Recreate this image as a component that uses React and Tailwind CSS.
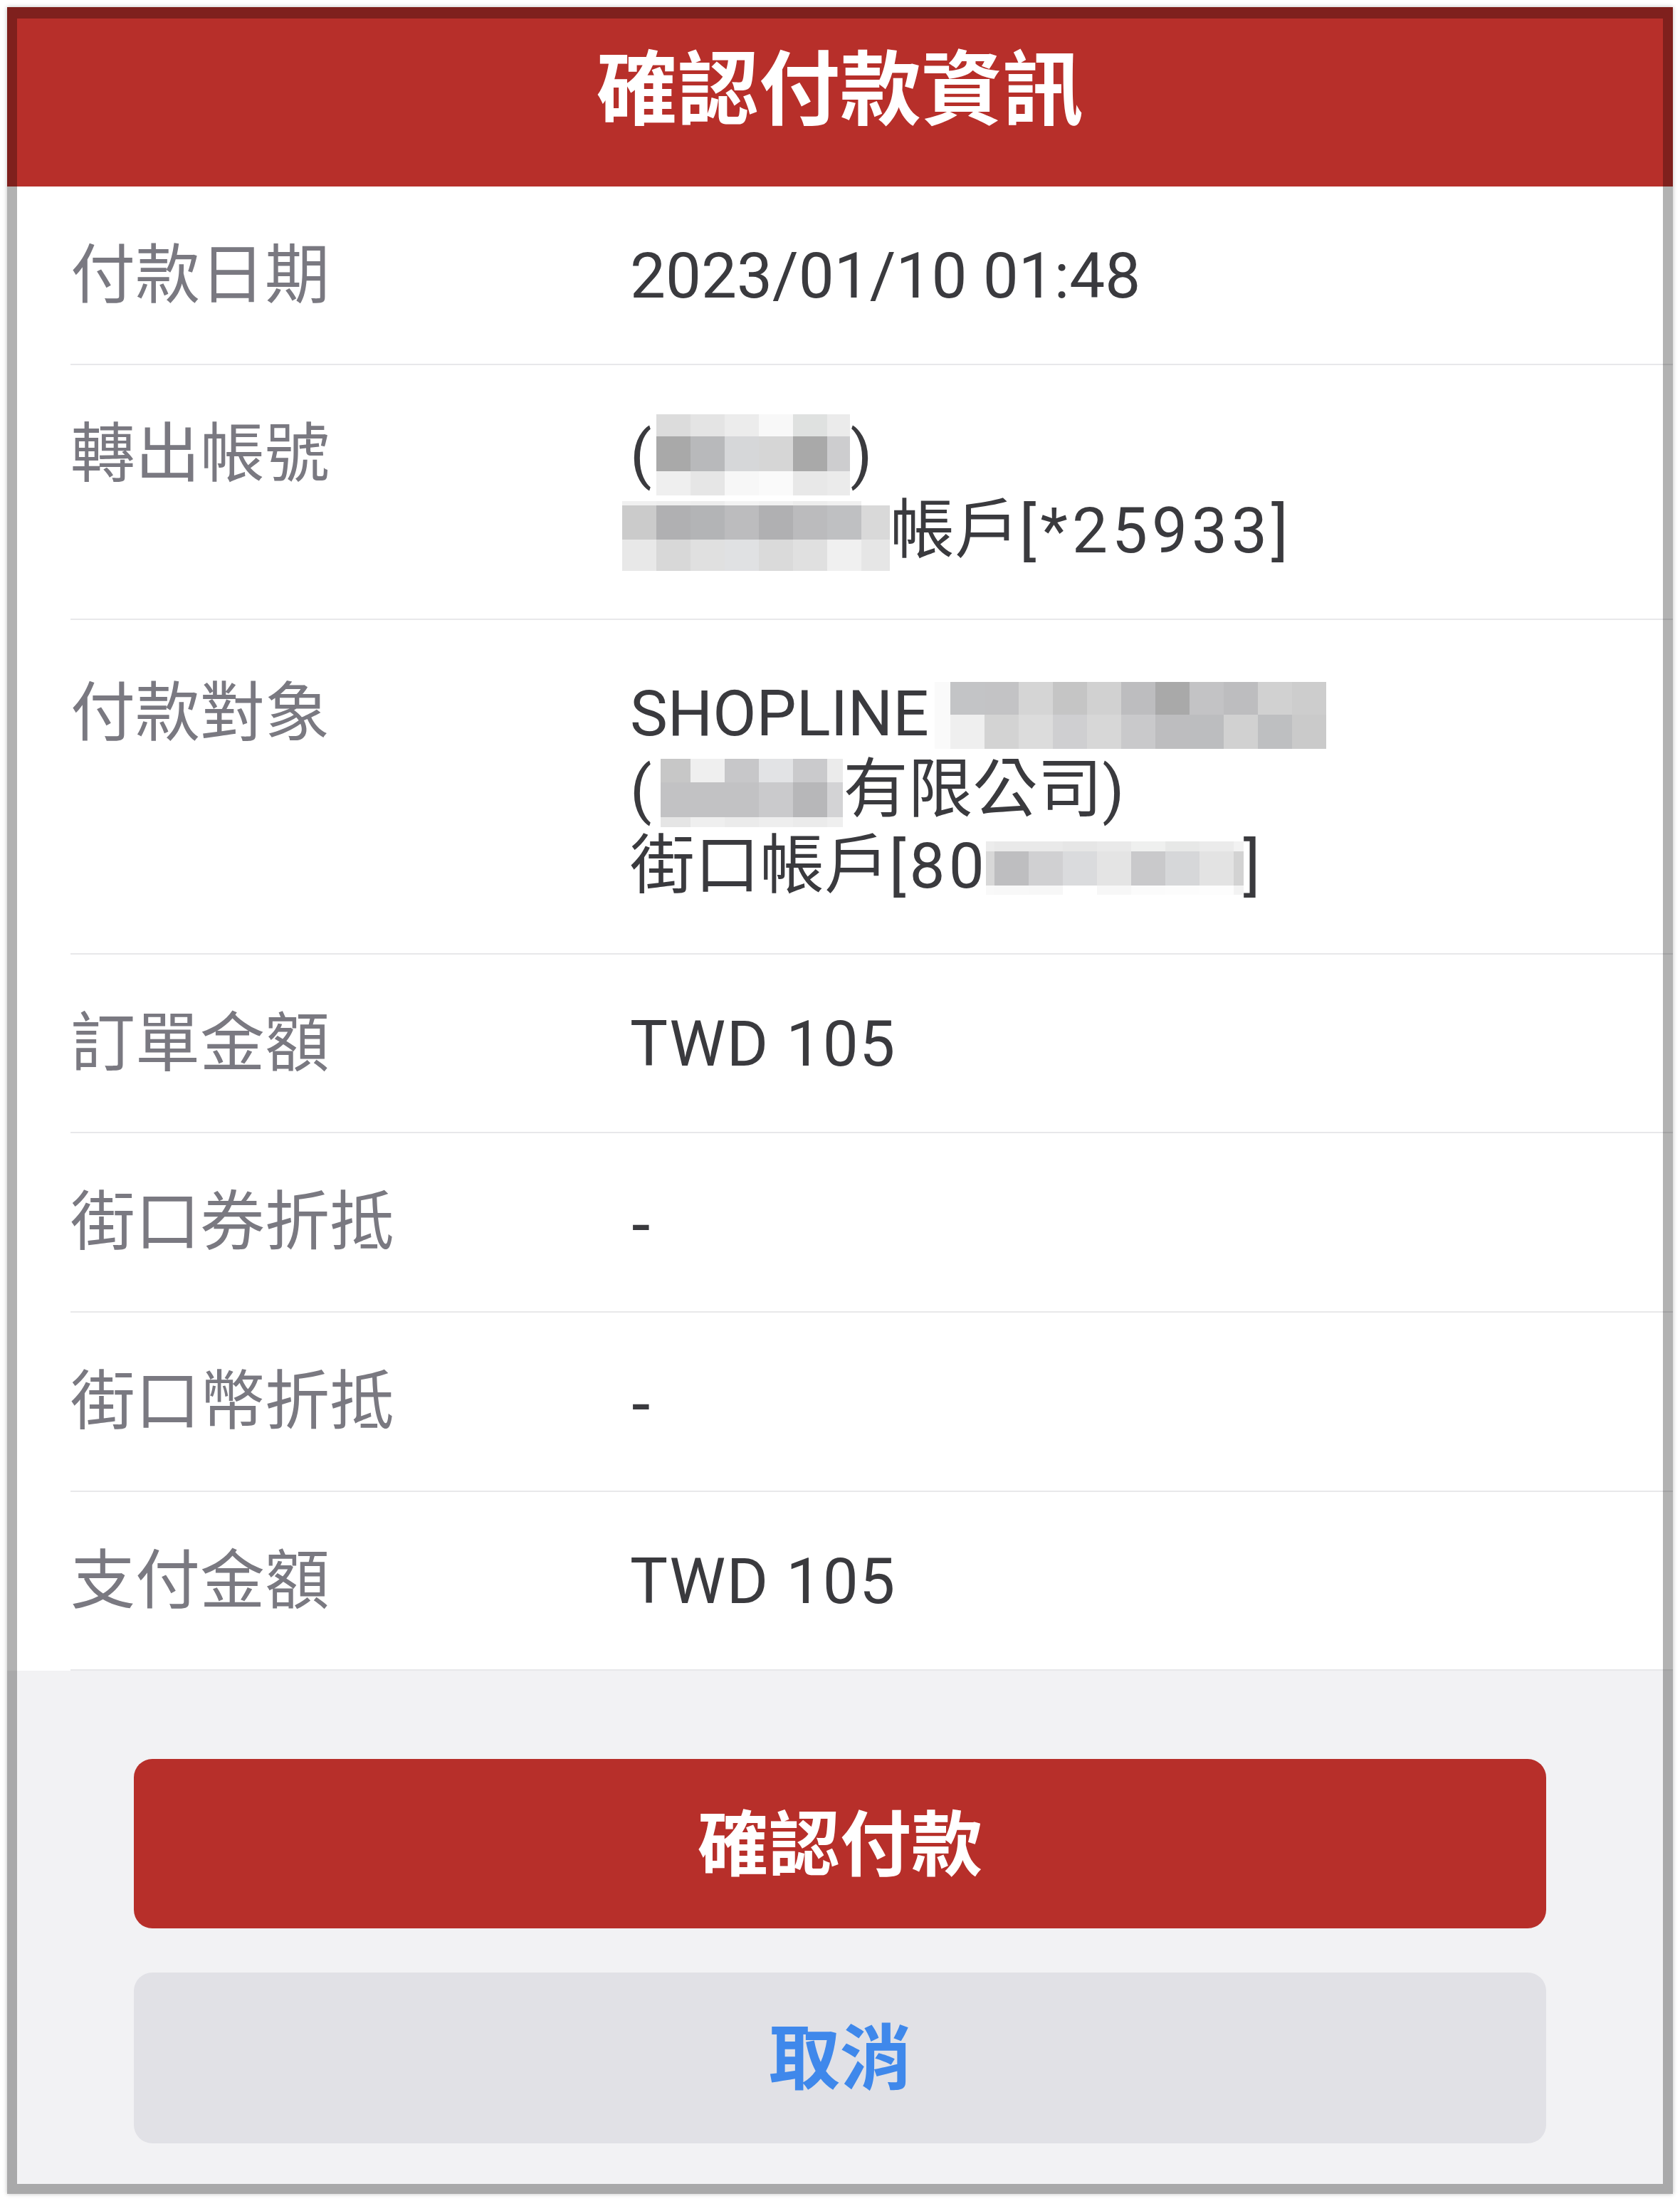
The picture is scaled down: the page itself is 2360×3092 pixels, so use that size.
import React from "react";

const M1 = {
  cols: [48, 48, 48, 48, 48, 32],
  rows: [31, 49, 34],
  colors: [
    ["#dcdcdc", "#e4e4e4", "#ececec", "#f8f8f8", "#dfe1e0", "#ebebeb"],
    ["#a9a9a9", "#b8b9bb", "#d6d7d9", "#d6d6d6", "#a9a9a9", "#cdcdcf"],
    ["#efefef", "#e6e6e6", "#f7f7f7", "#fafafa", "#e8e8e8", "#ebebeb"],
  ],
};
const M2 = {
  cols: [48, 48, 48, 48, 48, 48, 48, 40],
  rows: [6, 48, 44],
  colors: [
    ["#f0f0f0", "#eeeeee", "#ededed", "#f3f3f3", "#f1f1f1", "#ededed", "#f0f0f0", "#ffffff"],
    ["#cbcbcb", "#b0b0b2", "#b3b4b6", "#bcbcbe", "#b0b0b2", "#bbbbbd", "#bfc0c2", "#d9d9d9"],
    ["#e8e8e8", "#d8d8d8", "#e0e0e0", "#e0e1e3", "#dadada", "#e0e0e0", "#f0f0f0", "#e6e6e6"],
  ],
};
const M3 = {
  cols: [22, 48, 48, 48, 48, 48, 48, 48, 48, 48, 48, 48],
  rows: [46, 48],
  colors: [
    ["#fafafa", "#c3c4c6", "#c3c3c5", "#d5d5d5", "#c5c5c5", "#d1d1d1", "#bdbdbf", "#a9a9a9", "#c3c3c5", "#bdbdbf", "#d1d1d1", "#cdcdcd"],
    ["#fafafa", "#efefef", "#d3d3d3", "#dcdcdc", "#cfcfd1", "#d7d7d7", "#c9c9cb", "#bdbdbf", "#bcbdbf", "#d1d1d1", "#bebfc1", "#cacaca"],
  ],
};
const M4 = {
  cols: [42, 48, 48, 48, 48, 22],
  rows: [33, 49, 14],
  colors: [
    ["#c7c7c7", "#efefef", "#c7c7c9", "#e2e3e5", "#cacacc", "#ebebeb"],
    ["#c2c2c4", "#c2c2c4", "#c2c2c4", "#cacacc", "#b7b7b9", "#d3d3d5"],
    ["#e5e5e5", "#efefef", "#ebebeb", "#eeeeee", "#ebebeb", "#efefef"],
  ],
};
const M5 = {
  cols: [12, 48, 48, 48, 48, 48, 48, 48, 14],
  rows: [14, 48, 13],
  colors: [
    ["#ececec", "#e9e9e9", "#e9e9e9", "#e6e6e6", "#e9e9e9", "#eff0ef", "#e7e8e7", "#ebebeb", "#f2f2f2"],
    ["#d8d8d8", "#bebec0", "#d0d0d2", "#dadbdd", "#e4e4e4", "#c9c9cb", "#d6d7d9", "#e3e3e3", "#d3d3d3"],
    ["#f9f9f9", "#f8f8f8", "#f7f7f7", "#ffffff", "#f7f7f7", "#fbfbfb", "#fcfcfc", "#fdfdfd", "#f3f3f3"],
  ],
};

function Mosaic({ data, top, ml = 0 }) {
  const w = data.cols.reduce((a, b) => a + b, 0);
  return (
    <span
      className="relative inline-block h-[107px] align-top"
      style={{ width: w, marginLeft: ml }}
    >
      <span
        className="absolute left-0 grid"
        style={{
          top,
          gridTemplateColumns: data.cols.map((c) => c + "px").join(" "),
          gridTemplateRows: data.rows.map((r) => r + "px").join(" "),
        }}
      >
        {data.colors.flat().map((c, i) => (
          <span key={i} style={{ background: c }} />
        ))}
      </span>
    </span>
  );
}

function Row({ label, children, pad = "pt-[72px] pb-[70px]" }) {
  return (
    <div className={`ml-[89px] flex border-b-2 border-[#e8e8ea] ${pad}`}>
      <div className="w-[786px] shrink-0 text-[91px] text-[#7a7981]">{label}</div>
      <div className="whitespace-nowrap text-[#3a3a3e]">{children}</div>
    </div>
  );
}

function Cjk({ children }) {
  return <span className="text-[91px]">{children}</span>;
}

function Dash() {
  return <span className="font-['Liberation_Sans'] text-[92px]">-</span>;
}

export default function App() {
  return (
    <div className="min-h-[3092px] bg-white p-[10px] font-['Roboto','Noto_Sans_CJK_TC',sans-serif]">
      <div className="relative flex h-[3072px] flex-col overflow-hidden bg-white shadow-[0_0_6px_rgba(0,0,0,0.25)]">
        <div className="flex h-[252px] shrink-0 justify-center bg-[#b72f2a] pt-[60px]">
          <h1 className="text-[114px] font-bold leading-[114px] text-white">確認付款資訊</h1>
        </div>

        <div className="text-[89px] leading-[107px]">
          <Row label="付款日期">
            <div>2023/01/10 01:48</div>
          </Row>
          <Row label="轉出帳號">
            <div>
              (<Mosaic data={M1} top={-3} ml={7} />)
            </div>
            <div>
              <Mosaic data={M2} top={12} ml={-11} />
              <Cjk>帳戶</Cjk>
              <span className="tracking-[6px]">[*25933]</span>
            </div>
          </Row>
          <Row label="付款對象" pad="pt-[78px] pb-[69px]">
            <div>
              SHOPLINE{" "}
              <Mosaic data={M3} top={9} ml={-14} />
            </div>
            <div>
              (<Mosaic data={M4} top={10} ml={13} />
              <Cjk>有限公司</Cjk>)
            </div>
            <div>
              <Cjk>街口帳戶</Cjk>
              <span className="tracking-[5px]">[80</span>
              <Mosaic data={M5} top={19} ml={-3} />]
            </div>
          </Row>
          <Row label="訂單金額">
            <div className="tracking-[1.5px]">TWD 105</div>
          </Row>
          <Row label="街口券折抵">
            <div>
              <Dash />
            </div>
          </Row>
          <Row label="街口幣折抵">
            <div>
              <Dash />
            </div>
          </Row>
          <Row label="支付金額">
            <div className="tracking-[1.5px]">TWD 105</div>
          </Row>
        </div>

        <div className="flex flex-1 flex-col gap-[62px] bg-[#f2f2f4] px-[178px] pt-[124px] pb-[72px]">
          <button className="flex h-[238px] items-center justify-center rounded-[26px] bg-[#b72f2a] pt-[6px] text-[100px] font-bold text-white">
            確認付款
          </button>
          <button className="flex h-[240px] items-center justify-center rounded-[26px] bg-[#e1e1e6] pt-[4px] text-[100px] font-semibold text-[#3f88eb]">
            取消
          </button>
        </div>

        <div className="pointer-events-none absolute inset-0 border-[14px] border-t-[16px] border-black/30" />
      </div>
    </div>
  );
}
